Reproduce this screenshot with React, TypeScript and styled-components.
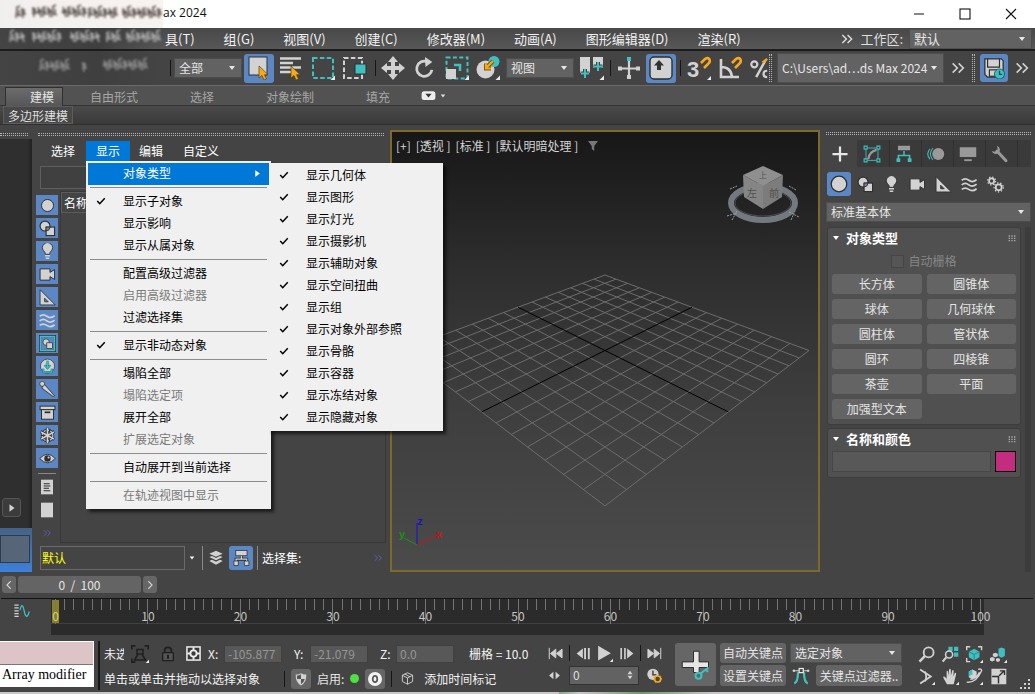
import React from "react";
import styled, { createGlobalStyle, css } from "styled-components";

const L = "#d2d2d2";
const T = "#3fc0c0";
const O = "#f6a81c";
const D = "#2e2e2e";
const BLUE = "#5b88c4";

const Global = createGlobalStyle`
  *, *::before, *::after { box-sizing: border-box; }
  html, body { margin: 0; padding: 0; background: #444444; }
  body, button, input, select {
    font-family: "Noto Sans CJK SC", "Liberation Sans", sans-serif;
    font-size: 12px;
    line-height: 16px;
    color: #dedede;
  }
  button, input, select { margin: 0; padding: 0; border: 0; background: none; border-radius: 0; outline: 0; }
  svg { display: block; flex: none; }
`;

/* ---------- icons ---------- */

const cursor = (
  <path d="M12 10 L12 22 L15 19.5 L17 24 L19.5 23 L17.5 18.8 L21 18.5 Z" fill={O} stroke="#5a4010" strokeWidth=".7" />
);
const corner = <path d="M24 19.5 V24 H19.5 Z" fill="#ececec" />;
const magnet = (
  <path d="M14 7 L18 3 Q21 1 22.5 3.5 Q23.5 6 21 8 L17 12" fill="none" stroke={O} strokeWidth="2.6" />
);

const icons: Record<string, React.ReactNode> = {
  select: <><rect x="2" y="1" width="18" height="18" fill={L} stroke={D} />{cursor}</>,
  selectName: <><path d="M1 2.5 H22 M1 7 H14 M1 11.500 H22 M1 16 H13" stroke={L} strokeWidth="2.6" />{cursor}</>,
  region: <><rect x="2" y="2" width="20" height="20" fill="none" stroke={T} strokeWidth="2" strokeDasharray="4.500 2.400" />{corner}</>,
  windowSel: <><rect x="1" y="2" width="18" height="20" fill="none" stroke={L} strokeWidth="2" strokeDasharray="4.500 2.400" /><rect x="12" y="8" width="11" height="10" fill={T} stroke={D} /></>,
  move: <path d="M12 0 L17 6 H14 V10 H18 V7 L24 12 L18 17 V14 H14 V18 H17 L12 24 L7 18 H10 V14 H6 V17 L0 12 L6 7 V10 H10 V6 H7 Z" fill={L} />,
  rotate: <><path d="M19.500 14 A8.300 8.300 0 1 1 14 5" fill="none" stroke={L} strokeWidth="3" /><path d="M12 0 L20 5.500 L12.500 11 Z" fill={L} /></>,
  scale: <><rect x="1.500" y="1.500" width="21" height="21" fill="none" stroke={T} strokeWidth="2" strokeDasharray="4 2.400" /><rect x="1" y="13" width="10" height="10" fill={L} /><path d="M9 9 H15 V15" fill="none" stroke={T} strokeWidth="2.600" />{corner}</>,
  place: <><circle cx="9.500" cy="13.500" r="9" fill={L} /><circle cx="18" cy="5.500" r="5.500" fill={T} /><path d="M17 5 L10 12 M10 7.500 V12.500 H15" fill="none" stroke="#7a5210" strokeWidth="4" /><path d="M17 5 L10 12 M10 7.500 V12.500 H15" fill="none" stroke={O} strokeWidth="2.200" />{corner}</>,
  pivot: <><rect x="0" y="1" width="10" height="16" fill={L} /><rect x="13" y="1" width="10" height="11" fill={L} /><path d="M5 13 V22 M.500 17.500 H9.500 M18 6 V15 M13.500 10.500 H22.500" stroke="#444" strokeWidth="4" /><path d="M5 13 V22 M1 17.500 H9 M18 6 V15 M14 10.500 H22" stroke={T} strokeWidth="2" />{corner}</>,
  manip: <><path d="M12 4 V21 M3 12.500 H21" stroke={L} strokeWidth="2.200" /><path d="M10 1 H14 V5 H10 Z" fill={T} /><path d="M10 19 H14 V23 H10 Z M1 10.500 H5 V14.500 H1 Z M19 10.500 H23 V14.500 H19 Z" fill={L} /></>,
  keyboard: <><rect x="1" y="1" width="22" height="22" rx="4" fill={L} stroke={D} strokeWidth="1.400" /><path d="M10 4 L15 9.500 H12 V14 H8 V9.500 H5 Z" fill="#333" /></>,
  snap: <><text x="0" y="21" fontSize="22" fontWeight="700" fontFamily="Liberation Sans, sans-serif" fill={L}>3</text>{magnet}<path d="M24 20 V24 H20 Z" fill="#ececec" /></>,
  angle: <><path d="M3 3 V21 H21 M3 11 Q13 11 14 21" fill="none" stroke={L} strokeWidth="2.600" />{magnet}</>,
  percent: <><path d="M20 4 L10 22" stroke={L} strokeWidth="2.600" /><circle cx="8" cy="8" r="3.300" fill="none" stroke={L} strokeWidth="2.400" /><path d="M22 15 Q18 15 18 18.500 Q18 22 22 22" fill="none" stroke={L} strokeWidth="2.400" /><path d="M17 6 L22 2" stroke={O} strokeWidth="2.600" /></>,
  save: <><path d="M2 2 H20 L22 4 V22 H5 L2 19 Z" fill={L} stroke={D} strokeWidth="1.400" /><path d="M5 2 V11 H18 V2" fill="none" stroke={D} strokeWidth="1.300" /><rect x="7" y="14" width="8" height="7" fill={L} stroke={D} strokeWidth="1.300" /><circle cx="18" cy="18.500" r="5.500" fill={T} stroke="#1d5d60" /><path d="M18 15 V19 H21" fill="none" stroke="#184a4d" strokeWidth="1.500" /></>,
  chevrons: <path d="M4 5 L11 12 L4 19 M13 5 L20 12 L13 19" fill="none" stroke="currentColor" strokeWidth="2.400" />,
  plus: <path d="M12 2 V22 M2 12 H22" stroke="#e8e8e8" strokeWidth="3" />,
  modify: <><path d="M4 6 V19 M6 4 H18 M20 6 V18 M6 20.500 H18" stroke={T} strokeWidth="1.200" fill="none" /><path d="M1.500 1.500 h4 v4 h-4 z M18.500 1.500 h4 v4 h-4 z M1.500 18.500 h4 v4 h-4 z M18.500 18.500 h4 v4 h-4 z" fill="none" stroke={T} strokeWidth="1.500" /><path d="M7 19 Q8 9 18 6.500" fill="none" stroke="#999" strokeWidth="3" /></>,
  hierarchy: <><rect x="4" y="1" width="16" height="6" fill="#999" /><path d="M12 8 V14 M4.500 19 V14 H19.500 V19" fill="none" stroke={T} strokeWidth="2" /><path d="M2 17.500 h5 v5 h-5 z M17 17.500 h5 v5 h-5 z" fill={T} /></>,
  motion: <><circle cx="15" cy="12" r="8" fill="#999" /><path d="M8 4 Q1 12 8 20 M4 5 Q-2 12 4 19" fill="none" stroke={T} strokeWidth="1.400" /></>,
  display: <><rect x="1" y="3" width="22" height="13" fill="#999" /><rect x="7" y="19" width="10" height="2.500" fill="#999" /></>,
  utility: <><path d="M8 8 L20 21" stroke="#999" strokeWidth="4" strokeLinecap="round" /><path d="M8 1 A6 6 0 0 1 10 11 A6 6 0 0 1 1 8 L5 9 L9 6 Z" fill="#999" /></>,
  sphere: <circle cx="12" cy="12" r="8.500" fill={L} stroke={D} strokeWidth="1.400" />,
  shapes: <><circle cx="8.500" cy="8.500" r="7" fill={L} stroke={D} strokeWidth="1.600" /><rect x="10" y="10" width="12" height="12" fill={L} stroke={D} strokeWidth="1.600" /><path d="M10 15.500 Q15.500 15 15.500 10 H10 Z" fill="#7f8a99" stroke={D} strokeWidth="1.300" /></>,
  light: <><path d="M9 16 Q9 13 6.500 11 A7 7 0 1 1 17.500 11 Q15 13 15 16 Z" fill={L} stroke={D} strokeWidth="1.200" /><path d="M8.500 18 H15.500 M9.500 21.500 H14.500" stroke={L} strokeWidth="2.400" /></>,
  camera: <path d="M1.500 4 H15.500 V9 L22 5 V19 L15.500 15 V20 H1.500 Z" fill={L} stroke={D} strokeWidth="1.400" />,
  helper: <path fillRule="evenodd" d="M1.500 1 L23 22.500 H1.500 Z M8 13 V18 H13 Z" fill={L} stroke={D} strokeWidth="1.200" />,
  waves: <path d="M1 6 Q6 2 11 6 T22 5 M1 12.500 Q6 8.500 11 12.500 T22 11.500 M1 19 Q6 15 11 19 T22 18" fill="none" stroke={L} strokeWidth="2.400" />,
  gears: <><circle cx="6.500" cy="7" r="3.600" fill="none" stroke={L} strokeWidth="2.400" /><circle cx="6.500" cy="7" r="5.600" fill="none" stroke={L} strokeWidth="1.800" strokeDasharray="2 2.400" /><circle cx="16.500" cy="16" r="4.200" fill="none" stroke={L} strokeWidth="2.400" /><circle cx="16.500" cy="16" r="6.400" fill="none" stroke={L} strokeWidth="1.800" strokeDasharray="2 2.500" /></>,
  group: <><rect x="1.500" y="1.500" width="21" height="21" fill="none" stroke={D} strokeWidth="3" /><rect x="2" y="2" width="20" height="20" fill="none" stroke={T} strokeWidth="2" /><circle cx="10" cy="10" r="4.500" fill={L} stroke={D} /><rect x="11" y="11" width="8" height="8" fill={L} stroke={D} /></>,
  xref: <><circle cx="12" cy="11.500" r="10" fill={L} stroke={D} /><path d="M12 4 V13 M8 10 L12 14.500 L16 10 M6 15 V20 H18 V15" fill="none" stroke="#1a7478" strokeWidth="3" /><path d="M12 4 V13 M8 10 L12 14.500 L16 10 M6 15 V20 H18 V15" fill="none" stroke={T} strokeWidth="1.600" /></>,
  bone: <><path d="M7 4 L22 21 L20 22 L4 10 Z" fill={L} stroke={D} strokeWidth="1.200" /><circle cx="4.500" cy="4" r="3.500" fill={L} stroke={D} /></>,
  container: <><rect x="1.500" y="3" width="21" height="5" fill={L} stroke={D} strokeWidth="1.400" /><rect x="3.500" y="8" width="17" height="13.500" fill={L} stroke={D} strokeWidth="1.400" /><rect x="8" y="10.500" width="8" height="2.500" fill={D} /></>,
  frozen: <><path d="M12 1 V23 M2.500 6.500 L21.500 17.500 M21.500 6.500 L2.500 17.500" stroke={D} strokeWidth="4.500" /><circle cx="12" cy="12" r="7.500" fill="none" stroke={D} strokeWidth="4" /><path d="M12 1.500 V22.500 M3 7 L21 17 M21 7 L3 17" stroke={L} strokeWidth="2.300" /><circle cx="12" cy="12" r="7.500" fill="none" stroke={L} strokeWidth="1.600" strokeDasharray="3 1.800" /></>,
  eye: <><path d="M1 12 Q12 0 23 12 Q12 24 1 12 Z" fill={L} stroke={D} strokeWidth="1.300" /><circle cx="12" cy="12" r="4.500" fill={D} /><circle cx="13.500" cy="10.500" r="1.500" fill={L} /></>,
  layers: <path d="M12 1 L22 5.500 L12 10 L2 5.500 Z M2 10.500 L6 9 L12 12 L18 9 L22 10.500 L12 15.500 L2 10.500 Z M2 16.500 L6 14.500 L12 17.500 L18 14.500 L22 16.500 L12 22 Z" fill={L} />,
  tree: <><rect x="5" y="2" width="15" height="7" fill={L} stroke={D} /><path d="M12.500 9 V14 M5.500 17 V13.500 H19.500 V17" fill="none" stroke={D} strokeWidth="4" /><path d="M12.500 9 V14 M5.500 17 V13.500 H19.500 V17" fill="none" stroke={L} strokeWidth="1.800" /><path d="M2.500 16 h6 v6 h-6 z M16.500 16 h6 v6 h-6 z" fill={L} stroke={D} /></>,
  doc: <><path d="M3 1 H21 V23 H3 Z" fill={L} /><path d="M7 7 H16 M7 10.500 H17 M7 14 H15 M7 17.500 H17" stroke={D} strokeWidth="1.600" /></>,
  blank: <path d="M3 1 H21 V23 H3 Z" fill={L} />,
  curve: <><path d="M2 3 H8 M2 7 H8 M2 11 H8 M2 15 H8 M2 19 H8" stroke={L} strokeWidth="1.800" /><path d="M10 10 Q12 0 14.500 6 L17 16 Q20 23 23 12" fill="none" stroke={T} strokeWidth="1.800" /></>,
  isolate: <><path d="M1 6 V1 H6 M18 1 H23 V6 M6 23 H1 V18" fill="none" stroke="#1f1f1f" strokeWidth="2.400" /><path d="M8 6 H16 V12 H8 Z M4 21 L9 13 M20 21 L15 13 M4 20 H20" fill="none" stroke="#1f1f1f" strokeWidth="2" />{corner}</>,
  lock: <><path d="M7 11 V6 Q7 2 12 2 Q17 2 17 6 V11" fill="none" stroke="#1f1f1f" strokeWidth="2.600" /><rect x="4" y="10" width="16" height="12" rx="1" fill="#555" stroke="#1f1f1f" strokeWidth="2" /><path d="M12 13 V19" stroke="#1f1f1f" strokeWidth="3" /></>,
  absolute: <><rect x="1.500" y="1.500" width="21" height="21" fill="#3a3a3a" stroke="#eee" strokeWidth="2.400" /><circle cx="12" cy="12" r="5" fill="none" stroke="#eee" strokeWidth="3" /><path d="M12 2 V8 M12 16 V22 M2 12 H8 M16 12 H22" stroke="#eee" strokeWidth="3" /></>,
  shield: <><path d="M12 2 Q16 4.500 21 4 Q22 18 12 23 Q2 18 3 4 Q8 4.500 12 2 Z" fill={L} /><path d="M12 4 Q8 6.500 5 6 Q5 10 5.500 12 H12 Z M12 12 H18.500 Q17 18 12 21 Z" fill="#555" /></>,
  zero: <><circle cx="12" cy="12" r="10.500" fill="#f2f2f2" /><ellipse cx="12" cy="12" rx="3.400" ry="4.800" fill="none" stroke="#555" strokeWidth="2.600" /></>,
  cube: <path d="M12 1.500 L21.500 6 V17.500 L12 22.500 L2.500 17.500 V6 Z M2.500 6 L12 11 L21.500 6 M12 11 V22.500 M7 3.700 L17 9" fill="none" stroke={L} strokeWidth="1.700" />,
  first: <path d="M2 3 V21 M4 12 L12.500 5 V19 Z M13.500 12 L22.500 5 V19 Z" fill={L} stroke={L} strokeWidth="1.600" />,
  last: <path d="M22 3 V21 M20 12 L11.500 5 V19 Z M10.500 12 L1.500 5 V19 Z" fill={L} stroke={L} strokeWidth="1.600" />,
  prev: <><path d="M1 12 L11 4 V20 Z" fill={L} /><path d="M14.500 3 V21 M20.500 3 V21" stroke={L} strokeWidth="3" /></>,
  next: <><path d="M23 12 L13 4 V20 Z" fill={L} /><path d="M9.500 3 V21 M3.500 3 V21" stroke={L} strokeWidth="2.600" /></>,
  play: <><path d="M3 1 L21 11.500 L3 22 Z" fill={L} />{corner}</>,
  keyMode: <path d="M2 12 L10 5 V19 Z M22 12 L14 5 V19 Z" fill={L} />,
  clock: <><circle cx="9.500" cy="10" r="9" fill={L} /><path d="M9.500 4 V11 H15" fill="none" stroke={D} strokeWidth="2" /><circle cx="17" cy="17.500" r="4.800" fill="#444" stroke={O} strokeWidth="2.600" /><circle cx="17" cy="17.500" r="6.400" fill="none" stroke={O} strokeWidth="1.600" strokeDasharray="2 2.200" /></>,
  bigKey: <><path d="M10 1 H14.500 V9.500 H22 V14 H14.500 V18 H10 V14 H1 V9.500 H10 Z" fill="#e6e6e6" stroke={D} strokeWidth=".800" /><circle cx="14" cy="20.500" r="2.400" fill="none" stroke={T} strokeWidth="1.600" /><path d="M15.500 19 L22 14 M20 15.500 L21.500 17.500" stroke={T} strokeWidth="1.600" /></>,
  tangent: <><path d="M3 22 Q8 20 8 7 M21 22 Q16 20 16 7" fill="none" stroke={T} strokeWidth="3" /><path d="M3 5 H9 M15 5 H21" stroke={L} strokeWidth="1.400" /><rect x="9.500" y="2" width="5.500" height="5.500" fill="none" stroke="#eee" strokeWidth="1.600" /><circle cx="2.500" cy="5" r="1.700" fill={L} /><circle cx="21.500" cy="5" r="1.700" fill={L} /></>,
  zoom: <><circle cx="15" cy="9" r="7" fill="none" stroke={L} strokeWidth="2.600" /><path d="M10 14 L2 22" stroke={L} strokeWidth="3.600" /></>,
  zoomAll: <><path d="M9 1 H15 V7 H9 Z M17 1 H23 V7 H17 Z M17 9 H23 V15 H17 Z" fill={T} /><circle cx="10" cy="12" r="5" fill="#444" stroke={L} strokeWidth="2.200" /><path d="M6 16 L1 22" stroke={L} strokeWidth="3" /></>,
  extents: <><path d="M1 6 V1 H6 M17 1 H22 V6 M6 22 H1 V17" fill="none" stroke={L} strokeWidth="2" /><path d="M11.500 4 L19 8 V16 L11.500 20 L4 16 V8 Z" fill={T} /><path d="M4 8 L11.500 12 L19 8 M11.500 12 V20" fill="none" stroke="#1d6d70" strokeWidth="1" />{corner}</>,
  extentsAll: <><path d="M12 4 L16 2 L21 4 V14 L16 16.500 L12 14 Z" fill={T} /><path d="M4 11 L7.500 9.500 L11 11 V14.500 L7.500 16 L4 14.500 Z M0 17 L3 15.500 L6.500 17 V20.500 L3 22 L0 20.500 Z M8.500 18 L11 17 L14 18 V21 L11 22.500 L8.500 21 Z" fill={L} />{corner}</>,
  fov: <><path d="M3 2 L18 12 L3 22" fill="none" stroke={L} strokeWidth="2.600" /><path d="M10 5 Q13 12 10 19" fill="none" stroke={L} strokeWidth="2.400" />{corner}</>,
  pan: <><path d="M7 23 L2 14 Q1 11 4 12.500 L6.500 15 V5 Q7 2.500 8.500 5 L9 11 L10 2 Q11.500 0 12.500 2.500 V11 L14.500 3 Q16.500 2 16.500 5 L16 12 L18 7 Q20 6 20 8.500 L18 17 L16.500 23 Z" fill={L} />{corner}</>,
  orbit: <><path d="M9 2 L15 5 V13 L9 16 L4 13 V5 Z" fill={L} /><path d="M9 2 L4 5 V12 L9 9 Z" fill={T} /><path d="M1 20 Q14 22 22 4 Q22 0 17 2 M6 16 Q14 16 19 6" fill="none" stroke={L} strokeWidth="2" />{corner}</>,
  maximize: <><path d="M2 1 H23 V23 H2 Z" fill={L} /><path d="M3 12 H12 V22 M13 11 L20 4 M14 4 H20.500 V10" fill="none" stroke={D} strokeWidth="2" /></>,
  funnel: <path d="M2 2 H22 L14.500 12 V22 L9.500 18 V12 Z" fill="#777" />,
  triDown: <path d="M3 6 H21 L12 18 Z" fill="currentColor" />,
  triRight: <path d="M6 3 V21 L18 12 Z" fill="currentColor" />,
  check: <path d="M3 12 L9 18.500 L21 5.500" fill="none" stroke="currentColor" strokeWidth="3.600" />,
  left: <path d="M16 3 L7 12 L16 21" fill="none" stroke="currentColor" strokeWidth="2.600" />,
  right: <path d="M8 3 L17 12 L8 21" fill="none" stroke="currentColor" strokeWidth="2.600" />,
  min: <path d="M2 12 H22" stroke="currentColor" strokeWidth="2" />,
  max: <rect x="2" y="2" width="20" height="20" fill="none" stroke="currentColor" strokeWidth="2.200" />,
  close: <path d="M2 2 L22 22 M22 2 L2 22" stroke="currentColor" strokeWidth="2.200" />,
  grip: <path d="M2 4h4v4H2z M10 4h4v4h-4z M18 4h4v4h-4z M2 11h4v4H2z M10 11h4v4h-4z M18 11h4v4h-4z M2 18h4v4H2z M10 18h4v4h-4z M18 18h4v4h-4z" fill="#aaa" />,
  sizeGrip: <path d="M18 2h4v4h-4z M18 10h4v4h-4z M18 18h4v4h-4z M10 10h4v4h-4z M10 18h4v4h-4z M2 18h4v4H2z" fill={L} />,
  updown: <path d="M6 10 L12 2 L18 10 Z M6 14 L12 22 L18 14 Z" fill={L} />,
  pill: <><rect x="1" y="5" width="22" height="14" rx="4" fill="#ededed" /><path d="M7 9 H17 L12 15 Z" fill="#333" /></>,
};

const Icon = ({ n, s = 16 }: { n: string; s?: number }) => (
  <svg width={s} height={s} viewBox="0 0 24 24" aria-hidden="true">{icons[n]}</svg>
);

/* Soft, unreadable marks that cover the left end of the top bars. */
const Smudge = ({ height, ink, spans }: { height: number; ink: string; spans: number[][] }) => (
  <SmudgeArt width="163" height={height} viewBox={`0 0 163 ${height}`} aria-hidden="true">
    {spans.map(([x0, x1, cy], k) => {
      const marks: React.ReactNode[] = [];
      for (let x = x0, i = k; x < x1; x += 5, i++) {
        const a = (i * 7) % 5;
        marks.push(
          <path
            key={x}
            d={`M${x} ${cy - 5 + a} l4 ${a - 2} M${x + 1} ${cy - 5} l${a - 1} 10 M${x} ${cy + 1} l5 ${2 - a} M${x + 3} ${cy - 3} v${6 - a}`}
          />
        );
      }
      return <g key={k} fill="none" stroke={ink} strokeWidth="1.5">{marks}</g>;
    })}
  </SmudgeArt>
);
const SmudgeArt = styled.svg`filter: blur(0.8px);`;

/* ---------- shared parts ---------- */

const Shell = styled.div`
  display: flex;
  flex-direction: column;
  min-height: 100vh;
  overflow: hidden;
  background: #444444;
`;

const Handle = styled.div<{ $vertical?: boolean }>`
  flex: none;
  ${p => (p.$vertical
    ? css`width: 3px; height: 28px; margin-right: 1px; border-left: 1px dotted #b4b4b4; border-right: 1px dotted #b4b4b4;`
    : css`height: 3px; margin-bottom: 1px; border-top: 1px dotted #b4b4b4; border-bottom: 1px dotted #b4b4b4;`)}
`;

const Rule = styled.span<{ $h?: number; $light?: boolean }>`
  flex: none;
  width: 1px;
  height: ${p => p.$h ?? 16}px;
  background: ${p => (p.$light ? "#8a8a8a" : "#161616")};
`;

const ComboWrap = styled.label<{ $w?: number; $h: number }>`
  position: relative;
  display: block;
  flex: none;
  width: ${p => (p.$w ? `${p.$w}px` : "auto")};
  height: ${p => p.$h}px;
  border: 1px solid #4d4d4d;
  background: #626262;
  color: #e6e6e6;
  select {
    width: 100%;
    height: 100%;
    padding: 0 4px;
    appearance: none;
    color: inherit;
  }
  svg { position: absolute; right: 5px; top: calc(50% - 4px); pointer-events: none; }
`;

const Combo = ({ label, value, ...rest }: { label: string; value: string; $w?: number; $h: number }) => (
  <ComboWrap {...rest}>
    <select aria-label={label}><option>{value}</option></select>
    <Icon n="triDown" s={8} />
  </ComboWrap>
);

const IconButton = styled.button<{ $w: number; $h: number; $on?: boolean; $raised?: boolean; $color?: string }>`
  display: flex;
  align-items: center;
  justify-content: center;
  flex: none;
  width: ${p => p.$w}px;
  height: ${p => p.$h}px;
  overflow: hidden;
  border-radius: 3px;
  color: ${p => p.$color ?? L};
  background: ${p => (p.$on ? BLUE : p.$raised ? "#666666" : "transparent")};
`;

const Spacer = styled.div`flex: 1;`;

/* ---------- top bars ---------- */

const TitleBar = styled.header`
  display: flex;
  height: 28px;
  background: #ffffff;
  color: #111111;
`;
const TitleVeil = styled.div`
  width: 163px;
  background: linear-gradient(90deg, #f1efee, #f9f3ef);
`;
const TitleText = styled.h1`
  margin: 0;
  font: 400 12px/26px "Open Sans", sans-serif;
`;
const WindowButtons = styled.div`
  display: flex;
  align-items: center;
  padding-right: 1px;
  button { width: 46px; height: 24px; display: flex; align-items: center; justify-content: center; color: #111111; }
`;

const MenuBar = styled.nav`
  display: flex;
  height: 23px;
  padding-right: 3px;
  background: linear-gradient(#484848, #575757);
  border-bottom: 2px solid #1c1c1c;
`;
const MenuVeil = styled.div`
  flex: none;
  width: 163px;
  background: linear-gradient(90deg, #444444, #3f3f3f 60%, transparent);
`;
const MenuList = styled.div`
  display: flex;
  gap: 29px;
  padding-left: 2px;
  button { font-size: 13px; line-height: 18px; white-space: nowrap; color: #f2f2f2; }
`;
const Workspace = styled.div`
  display: flex;
  align-items: center;
  gap: 6px;
  font-size: 13px;
  select { font-size: 13px; }
`;

const Toolbar = styled.div`
  display: flex;
  align-items: center;
  height: 34px;
  padding-right: 3px;
`;
const ToolGroup = styled.div<{ $gap?: number; $pad?: number; $start?: number }>`
  display: flex;
  align-items: center;
  gap: ${p => p.$gap ?? 2}px;
  padding: 0 ${p => p.$pad ?? 2}px 0 ${p => p.$start ?? p.$pad ?? 2}px;
`;

const Ribbon = styled.div`
  display: flex;
  height: 21px;
  border-top: 1px solid #6a6a6a;
  border-bottom: 1px solid #333333;
  background: #525252;
`;
const RibbonTab = styled.button<{ $w: number; $on?: boolean }>`
  width: ${p => p.$w}px;
  height: 19px;
  margin-top: 1px;
  color: ${p => (p.$on ? "#e4e4e4" : "#a6a6a6")};
  ${p => p.$on && css`
    border: 1px solid #303030;
    border-bottom: 0;
    background: linear-gradient(#6c6c6c, #565656);
    padding-left: 16px;
    margin-left: 5px;
  `}
`;
const SubRibbon = styled.div`
  height: 19px;
  padding-left: 3px;
  border-bottom: 1px solid #303030;
  background: linear-gradient(#4a4a4a, #3a3a3a);
  button { height: 18px; padding: 0 4px; border: 1px solid #5c5c5c; background: #484848; line-height: 15px; }
`;

/* ---------- main area ---------- */

const Main = styled.main`
  display: flex;
  flex: 1;
  min-height: 450px;
  padding: 5px 4px 3px 0;
`;

const Dock = styled.aside`
  display: flex;
  flex-direction: column;
  flex: none;
  width: 32px;
  padding-top: 3px;
  ${Handle} { width: 28px; }
`;
const DockBody = styled.div`
  display: flex;
  flex-direction: column;
  justify-content: flex-end;
  flex: 1;
  margin-top: 2px;
  background: linear-gradient(90deg, #2f2f2f 85%, #222222);
  button { margin: 0 0 11px 2px; border: 1px solid #555555; background: #3c3c3c; }
`;
const DockTile = styled.div`
  height: 44px;
  padding: 7px 2px 9px 0;
  background: linear-gradient(#466284, #3d80dc);
  &::after { content: ""; display: block; height: 28px; border: 1px solid #2c3b4d; background: #566578; }
`;

const Explorer = styled.section`
  display: flex;
  flex-direction: column;
  flex: none;
  width: 358px;
  padding: 3px 4px 2px 4px;
`;
const ExplorerHandle = styled(Handle)`margin: 0 2px 1px;`;
const ExplorerMenu = styled.div`
  position: relative;
  z-index: 5;
  display: flex;
  margin-top: 4px;
  padding-left: 4px;
`;
const ExplorerMenuItem = styled.div<{ $w: number }>`
  position: relative;
  width: ${p => p.$w}px;
`;
const ExplorerMenuButton = styled.button<{ $open?: boolean }>`
  width: 100%;
  height: 20px;
  color: #ffffff;
  background: ${p => (p.$open ? "#0078d7" : "transparent")};
`;
const Popup = styled.div<{ $w: number; $sub?: boolean }>`
  position: absolute;
  left: ${p => (p.$sub ? "100%" : "0")};
  top: ${p => (p.$sub ? "0" : "100%")};
  z-index: 10;
  width: ${p => p.$w}px;
  padding: 2px;
  background: #f0f0f0;
  box-shadow: 3px 3px 3px rgba(0, 0, 0, 0.6);
`;
const PopupRow = styled.div`position: relative;`;
const PopupItem = styled.button<{ $hot?: boolean }>`
  display: grid;
  grid-template-columns: 35px 1fr 16px;
  align-items: center;
  width: 100%;
  height: 22px;
  padding: 0 0 2px;
  text-align: left;
  color: ${p => (p.$hot ? "#ffffff" : "#000000")};
  background: ${p => (p.$hot ? "#0078d7" : "transparent")};
  &:disabled { color: #7a7a7a; }
  > i { padding-left: 8px; }
`;
const PopupRule = styled.hr`
  height: 1px;
  margin: 2px;
  margin-bottom: 3px;
  border: 0;
  background: #8c8c8c;
`;
const SearchBox = styled.input`
  height: 23px;
  margin: 5px 8px 0 4px;
  border: 1px solid #5e5e5e;
  background: #404040;
`;
const ExplorerBody = styled.div`
  display: flex;
  flex: 1;
  min-height: 0;
`;
const FilterColumn = styled.div`
  display: flex;
  flex-direction: column;
  align-items: center;
  gap: 3px;
  width: 22px;
  padding-top: 6px;
  ${IconButton} { border-radius: 0; }
`;
const FilterRule = styled.hr`width: 18px; height: 1px; margin: 2px 0 0; border: 0; background: #8a8a8a;`;
const TreeBox = styled.div`
  flex: 1;
  margin: 2px 0 0 2px;
  border: 1px solid #383838;
`;
const TreeHead = styled.button`
  display: block;
  width: 100%;
  height: 21px;
  padding-left: 2px;
  border: 1px solid #5c5c5c;
  text-align: left;
  color: #ffffff;
`;
const ExplorerFoot = styled.div`
  display: flex;
  align-items: center;
  gap: 4px;
  height: 25px;
  margin: 2px 0 0 4px;
  color: #ffffff;
`;
const LayerField = styled.input`
  width: 145px;
  height: 24px;
  padding: 0 1px;
  border: 1px solid #6a6a6a;
  color: #ffff00;
`;

const Viewport = styled.section`
  position: relative;
  flex: 1;
  min-width: 0;
  border: 2px solid #7d692a;
  background: linear-gradient(#171717, #2e2e2e 32%, #3e3e3e 62%, #4b4b4b);
`;
const ViewLabels = styled.div`
  position: relative;
  display: flex;
  align-items: center;
  gap: 5px;
  padding: 6px 4px;
  button { color: #d4d4d4; white-space: nowrap; }
`;
const SceneArt = styled.svg`
  position: absolute;
  inset: 0;
  width: 100%;
  height: 100%;
`;

const N = 7;
const project = (u: number, v: number) => {
  const a = (u + v) / (2 * N);
  const b = (u - v) / (2 * N);
  const w = 1 - 0.3463 * a;
  return [213 + (204 * b) / w, 218.5 + (101.6 * a) / w];
};
const gridLine = (u1: number, v1: number, u2: number, v2: number, ink: string) => {
  const [x1, y1] = project(u1, v1);
  const [x2, y2] = project(u2, v2);
  return <line key={`${u1},${v1},${u2},${v2}`} x1={x1} y1={y1} x2={x2} y2={y2} stroke={ink} strokeWidth="1" />;
};
const steps = Array.from({ length: N * 2 + 1 }, (_, i) => i - N);

const Scene = () => (
  <SceneArt viewBox="0 0 426 438" aria-hidden="true">
    {steps.filter(i => i).map(i => gridLine(i, -N, i, N, "#6c6c6c"))}
    {steps.filter(i => i).map(i => gridLine(-N, i, N, i, "#6c6c6c"))}
    {gridLine(0, -N, 0, N, "#000")}
    {gridLine(-N, 0, N, 0, "#000")}
    <ellipse cx="371" cy="71" rx="32" ry="17" fill="none" stroke="#74797f" strokeWidth="6" />
    <ellipse cx="371" cy="71" rx="28" ry="13" fill="none" stroke="#4b4e53" strokeWidth="1" />
    <path d="M338 57 l7 -3 M397 54 l7 4 M335 84 l10 -3 M340 88 l5 -9 M397 80 l10 5 M399 88 l4 -9" stroke="#9a9fa5" strokeDasharray="2 1" />
    <path d="M371 34 L391 43 L371 54 L351 43 Z" fill="#8f8f8f" />
    <path d="M351 43 L371 54 V77 L352 65 Z" fill="#858585" />
    <path d="M391 43 L371 54 V77 L390 65 Z" fill="#7c7c7c" />
    <g fill="#505050" fontSize="10" textAnchor="middle" fontFamily="Noto Sans CJK SC, sans-serif">
      <text x="371" y="46" fontSize="8">上</text>
      <text x="360" y="65">左</text>
      <text x="382" y="65">前</text>
    </g>
    <path d="M25 413 V391" stroke="#1414c8" />
    <path d="M25 413 L46 403" stroke="#c81414" />
    <path d="M25 413 L12 406" stroke="#149614" />
    <g fontSize="11" fontWeight="700" textAnchor="middle" fontFamily="Liberation Sans, sans-serif">
      <text x="28" y="393" fill="#1414c8">z</text>
      <text x="47" y="406" fill="#c81414">x</text>
      <text x="10" y="406" fill="#149614">y</text>
    </g>
  </SceneArt>
);

const Command = styled.aside`
  display: flex;
  flex-direction: column;
  flex: none;
  width: 211px;
  padding: 2px 0 0 6px;
`;
const CommandTabs = styled.div`
  display: flex;
  margin-top: 4px;
  background: #3a3a3a;
`;
const CommandTab = styled.button<{ $on?: boolean }>`
  display: flex;
  align-items: center;
  justify-content: center;
  width: 32px;
  height: 27px;
  padding-right: 4px;
  border-right: 1px solid ${p => (p.$on ? "#3a3a3a" : "#303030")};
  background: ${p => (p.$on ? "#444444" : "transparent")};
`;
const Categories = styled.div`
  display: flex;
  gap: 2px;
  margin: 5px 0 6px 1px;
`;
const RolloutArea = styled.div`
  display: flex;
  flex: 1;
  gap: 4px;
  margin: 5px 0 0 1px;
`;
const RolloutStack = styled.div`
  display: flex;
  flex-direction: column;
  gap: 3px;
  flex: 1;
`;
const ScrollTrack = styled.div`width: 6px; background: #3c3c3c;`;
const Rollout = styled.section`
  padding: 0 4px 5px;
  border: 1px solid #3d3d3d;
  border-radius: 3px;
  background: #505050;
`;
const RolloutHead = styled.h2`
  display: flex;
  align-items: center;
  gap: 6px;
  height: 20px;
  margin: 0;
  font-size: 13px;
  font-weight: 700;
  color: #ffffff;
  span { flex: 1; }
`;
const AutoGrid = styled.label`
  display: flex;
  align-items: center;
  justify-content: center;
  gap: 4px;
  height: 26px;
  color: #868686;
  input { appearance: none; width: 13px; height: 13px; border: 1px solid #454545; background: #555555; }
`;
const ButtonGrid = styled.div`
  display: grid;
  grid-template-columns: 1fr 1fr;
  gap: 5px;
`;
const FlatButton = styled.button<{ $h?: number; $w?: number }>`
  height: ${p => p.$h ?? 20}px;
  width: ${p => (p.$w ? `${p.$w}px` : "auto")};
  overflow: hidden;
  white-space: nowrap;
  border-radius: 3px;
  background: #646464;
  color: #e4e4e4;
`;
const NameRow = styled.div`
  display: flex;
  gap: 4px;
  padding-top: 2px;
  input { flex: 1; min-width: 0; height: 21px; border: 1px solid #464646; background: #585858; }
  button { width: 21px; height: 21px; border: 1px solid #000000; background: #c42c80; }
`;

/* ---------- timeline ---------- */

const TimeSlider = styled.div`
  display: flex;
  align-items: center;
  gap: 2px;
  height: 23px;
  padding: 0 0 4px 2px;
  button { height: 17px; }
`;
const Track = styled.div`
  display: flex;
  height: 38px;
  margin: 0 2px 0 1px;
  border-top: 1px solid #151515;
`;
const TrackSide = styled.div<{ $w: number }>`
  flex: none;
  width: ${p => p.$w}px;
  padding: 4px 12px;
`;
const RulerArt = styled.svg`
  flex: 1 1 0;
  min-width: 0;
  height: 36px;
  overflow: visible;
  background: #2b2b2b;
`;

const ticks = Array.from({ length: 101 }, (_, i) => i);
const Ruler = () => {
  const at = (i: number) => `${0.48 + i * 0.9915}%`;
  return (
    <RulerArt aria-label="时间轴">
      <line x1="0" x2="100%" y1="24.5" y2="24.5" stroke="#404040" />
      <rect x="1" y="1" width="7" height="23" fill="#8a8222" />
      {ticks.map(i => (
        <line key={i} x1={at(i)} x2={at(i)} y1="0" y2={i % 10 ? 11 : 25} stroke="#747474" shapeRendering="crispEdges" />
      ))}
      {ticks.filter(i => i % 10 === 0).map(i => (
        <text key={i} x={at(i)} y="22" fontSize="12" textAnchor="middle" fill={i ? "#c4c4c4" : "#d8d060"}>{i}</text>
      ))}
    </RulerArt>
  );
};

/* ---------- status area ---------- */

const Status = styled.footer`
  display: flex;
  height: 56px;
  padding: 5px 4px 2px 0;
  color: #f2f2f2;
`;
const Script = styled.div`
  display: flex;
  flex-direction: column;
  width: 94px;
  height: 46px;
  border: 1px solid #ffffff;
  border-left: 0;
  input {
    flex: 1;
    width: 100%;
    min-height: 0;
    padding: 0 2px;
    font-family: "Liberation Serif", serif;
    font-size: 14px;
    color: #000000;
    background: #ffffff;
  }
  input:first-child { background: #dcc4c7; border-bottom: 1px solid #777777; }
`;
const StatusMiddle = styled.div`
  display: flex;
  flex-direction: column;
  gap: 4px;
  flex: 1;
  min-width: 0;
  margin-left: 4px;
  padding: 2px 0 0 4px;
  border-left: 2px solid #161616;
`;
const StatusRow = styled.div`
  display: flex;
  align-items: center;
  height: 21px;
  white-space: nowrap;
`;
const Clipped = styled.span`width: 20px; overflow: hidden;`;
const StateIcons = styled.div`
  display: flex;
  align-items: center;
  justify-content: space-between;
  width: 70px;
  margin: 0 7px;
`;
const Coord = styled.label`
  display: flex;
  align-items: center;
  width: 86px;
  span { width: 16px; }
  input { width: 58px; height: 18px; padding: 0 3px; border: 1px solid #404040; background: #585858; color: #969696; }
`;
const GridSize = styled.span`margin-left: 3px;`;
const Prompt = styled.span`width: 180px;`;
const Dot = styled.span`width: 9px; height: 9px; border-radius: 50%; background: #50e040;`;
const Enable = styled.div`
  display: flex;
  align-items: center;
  gap: 6px;
  padding-left: 6px;
  color: #e4e4e4;
`;

const Transport = styled.div`
  display: flex;
  flex-direction: column;
  gap: 2px;
  flex: none;
  width: 130px;
  padding-top: 2px;
`;
const TransportRow = styled.div`
  display: flex;
  align-items: center;
  justify-content: space-between;
  height: 20px;
  padding: 0 6px 0 10px;
`;
const FrameField = styled.label`
  display: flex;
  align-items: center;
  width: 70px;
  height: 19px;
  padding-right: 3px;
  border: 1px solid #333333;
  background: #626262;
  input { flex: 1; min-width: 0; padding: 0 3px; }
`;
const KeyArea = styled.div`
  display: grid;
  grid-template-columns: 41px 66px 22px 86px;
  grid-template-rows: 20px 21px;
  column-gap: 4px;
  row-gap: 2px;
  flex: none;
  margin: 2px 0 0 7px;
  > :first-child { grid-row: 1 / 3; }
  > label { grid-column: 3 / 5; }
`;
const Nav = styled.div`
  display: grid;
  grid-template-columns: repeat(4, 24px);
  grid-auto-rows: 22px;
  flex: none;
  margin: 2px 0 0 12px;
`;
const SizeCorner = styled.div`align-self: flex-end; margin-left: 9px;`;
const Behind = styled.div`
  height: 2px;
  background: linear-gradient(90deg, #c9c6c6 54%, #8aa886 54%, #c9c6c6 56%, #6f9a6c 62%, #c9c6c6 69%);
`;

/* ---------- data ---------- */

const menus = ["具(T)", "组(G)", "视图(V)", "创建(C)", "修改器(M)", "动画(A)", "图形编辑器(D)", "渲染(R)"];
const filters = ["sphere", "shapes", "light", "camera", "helper", "waves", "group", "xref", "bone", "container", "frozen", "eye"];
const typeItems = ["显示几何体", "显示图形", "显示灯光", "显示摄影机", "显示辅助对象", "显示空间扭曲", "显示组", "显示对象外部参照", "显示骨骼", "显示容器", "显示冻结对象", "显示隐藏对象"];
type Entry = { t?: string; on?: boolean; off?: boolean };
const showItems: Entry[] = [
  {}, { t: "显示子对象", on: true }, { t: "显示影响" }, { t: "显示从属对象" },
  {}, { t: "配置高级过滤器" }, { t: "启用高级过滤器", off: true }, { t: "过滤选择集" },
  {}, { t: "显示非动态对象", on: true },
  {}, { t: "塌陷全部" }, { t: "塌陷选定项", off: true }, { t: "展开全部" }, { t: "扩展选定对象", off: true },
  {}, { t: "自动展开到当前选择" },
  {}, { t: "在轨迹视图中显示", off: true },
];
const primitives = ["长方体", "圆锥体", "球体", "几何球体", "圆柱体", "管状体", "圆环", "四棱锥", "茶壶", "平面", "加强型文本"];
const coords = [["X:", "-105.877"], ["Y:", "-21.079"], ["Z:", "0.0"]];

const Tool = ({ n, w = 32, on, s = 24 }: { n: string; w?: number; on?: boolean; s?: number }) => (
  <IconButton $w={w} $h={29} $on={on} aria-label={n}><Icon n={n} s={s} /></IconButton>
);

export default function App() {
  return (
    <Shell>
      <Global />
      <TitleBar>
        <TitleVeil>
          <Smudge height={28} ink="#5d5551" spans={[[16, 22, 13], [32, 56, 12], [62, 84, 12], [88, 114, 13], [122, 160, 13]]} />
        </TitleVeil>
        <TitleText>ax 2024</TitleText>
        <Spacer />
        <WindowButtons>
          <button aria-label="最小化"><Icon n="min" s={12} /></button>
          <button aria-label="最大化"><Icon n="max" s={12} /></button>
          <button aria-label="关闭"><Icon n="close" s={12} /></button>
        </WindowButtons>
      </TitleBar>

      <MenuBar>
        <MenuVeil>
          <Smudge height={21} ink="#aaaaaa" spans={[[10, 22, 9], [32, 58, 9], [70, 96, 9], [106, 118, 9], [126, 158, 9]]} />
        </MenuVeil>
        <MenuList>{menus.map(m => <button key={m}>{m}</button>)}</MenuList>
        <Spacer />
        <Workspace>
          <Icon n="chevrons" s={14} />
          <span>工作区:</span>
          <Combo label="工作区" value="默认" $w={123} $h={20} />
        </Workspace>
      </MenuBar>

      <Toolbar>
        <MenuVeil>
          <Smudge height={34} ink="#8c8c8c" spans={[[40, 68, 15], [82, 84, 16], [103, 145, 14]]} />
        </MenuVeil>
        <ToolGroup $gap={3} $start={7} $pad={2}><Rule /><Combo label="选择过滤器" value="全部" $w={68} $h={20} /></ToolGroup>
        <Tool n="select" w={30} on />
        <Tool n="selectName" w={33} />
        <Tool n="region" w={32} />
        <Tool n="windowSel" w={32} />
        <ToolGroup $pad={4}><Rule /></ToolGroup>
        <Tool n="move" w={26} />
        <Tool n="rotate" w={38} s={22} />
        <Tool n="scale" w={26} />
        <Tool n="place" w={36} />
        <Combo label="参考坐标系" value="视图" $w={68} $h={20} />
        <Tool n="pivot" w={36} />
        <Rule />
        <Tool n="manip" w={35} />
        <Tool n="keyboard" w={30} on />
        <ToolGroup $pad={4}><Rule /></ToolGroup>
        <Tool n="snap" w={28} />
        <Tool n="angle" w={34} />
        <Tool n="percent" w={22} s={22} />
        <Spacer />
        <ToolGroup $gap={4} $pad={0}>
          <Handle $vertical />
          <Combo label="项目文件夹" value="C:\Users\ad…ds Max 2024" $w={167} $h={30} />
          <IconButton $w={20} $h={28} aria-label="更多"><Icon n="chevrons" s={16} /></IconButton>
          <Handle $vertical />
          <IconButton $w={28} $h={28} $on aria-label="保存"><Icon n="save" s={22} /></IconButton>
          <IconButton $w={20} $h={28} aria-label="更多工具"><Icon n="chevrons" s={16} /></IconButton>
        </ToolGroup>
      </Toolbar>

      <Ribbon>
        <RibbonTab $w={58} $on>建模</RibbonTab>
        <RibbonTab $w={102}>自由形式</RibbonTab>
        <RibbonTab $w={74}>选择</RibbonTab>
        <RibbonTab $w={102}>对象绘制</RibbonTab>
        <RibbonTab $w={74}>填充</RibbonTab>
        <ToolGroup $gap={4} $pad={6}><Icon n="pill" s={15} /><Icon n="triDown" s={6} /></ToolGroup>
      </Ribbon>
      <SubRibbon><button>多边形建模</button></SubRibbon>

      <Main>
        <Dock>
          <Handle />
          <DockBody>
            <IconButton $w={19} $h={19} aria-label="展开"><Icon n="triRight" s={10} /></IconButton>
            <DockTile />
          </DockBody>
        </Dock>

        <Explorer>
          <ExplorerHandle />
          <ExplorerMenu>
            <ExplorerMenuItem $w={46}><ExplorerMenuButton>选择</ExplorerMenuButton></ExplorerMenuItem>
            <ExplorerMenuItem $w={44}>
              <ExplorerMenuButton $open>显示</ExplorerMenuButton>
              <Popup $w={185} role="menu">
                <PopupRow>
                  <PopupItem $hot role="menuitem"><i /><span>对象类型</span><Icon n="triRight" s={9} /></PopupItem>
                  <Popup $w={174} $sub role="menu">
                    {typeItems.map(t => (
                      <PopupItem key={t} role="menuitem"><i><Icon n="check" s={10} /></i><span>{t}</span></PopupItem>
                    ))}
                  </Popup>
                </PopupRow>
                {showItems.map((e, i) =>
                  e.t ? (
                    <PopupItem key={i} role="menuitem" disabled={e.off}>
                      <i>{e.on && <Icon n="check" s={10} />}</i><span>{e.t}</span>
                    </PopupItem>
                  ) : <PopupRule key={i} />
                )}
              </Popup>
            </ExplorerMenuItem>
            <ExplorerMenuItem $w={42}><ExplorerMenuButton>编辑</ExplorerMenuButton></ExplorerMenuItem>
            <ExplorerMenuItem $w={58}><ExplorerMenuButton>自定义</ExplorerMenuButton></ExplorerMenuItem>
          </ExplorerMenu>
          <SearchBox aria-label="查找" />
          <ExplorerBody>
            <FilterColumn>
              {filters.map(f => (
                <IconButton key={f} $w={22} $h={20} $on aria-label={f}><Icon n={f} s={17} /></IconButton>
              ))}
              <FilterRule />
              <IconButton $w={22} $h={20} aria-label="列表"><Icon n="doc" s={16} /></IconButton>
              <IconButton $w={22} $h={20} aria-label="空白"><Icon n="blank" s={16} /></IconButton>
              <IconButton $w={22} $h={20} $color="#5c5cb4" aria-label="更多过滤"><Icon n="chevrons" s={10} /></IconButton>
            </FilterColumn>
            <TreeBox><TreeHead>名称</TreeHead></TreeBox>
          </ExplorerBody>
          <ExplorerFoot>
            <LayerField aria-label="图层" defaultValue="默认" />
            <ToolGroup $gap={7} $pad={0}><Icon n="triDown" s={6} /><Rule $h={24} $light /></ToolGroup>
            <IconButton $w={18} $h={24} aria-label="图层"><Icon n="layers" s={16} /></IconButton>
            <IconButton $w={24} $h={24} $on aria-label="层次"><Icon n="tree" s={18} /></IconButton>
            <Rule $h={24} $light />
            <span>选择集:</span>
            <Spacer />
            <IconButton $w={16} $h={24} $color="#5c5cb4" aria-label="更多"><Icon n="chevrons" s={10} /></IconButton>
          </ExplorerFoot>
        </Explorer>

        <Viewport>
          <Scene />
          <ViewLabels>
            <button>[+]</button>
            <button>[透视 ]</button>
            <button>[标准 ]</button>
            <button>[默认明暗处理 ]</button>
            <IconButton $w={20} $h={16} aria-label="过滤"><Icon n="funnel" s={12} /></IconButton>
          </ViewLabels>
        </Viewport>

        <Command>
          <Handle />
          <CommandTabs>
            {["plus", "modify", "hierarchy", "motion", "display", "utility"].map((n, i) => (
              <CommandTab key={n} $on={i === 0} aria-label={n}><Icon n={n} s={18} /></CommandTab>
            ))}
          </CommandTabs>
          <Categories>
            {["sphere", "shapes", "light", "camera", "helper", "waves", "gears"].map((n, i) => (
              <IconButton key={n} $w={24} $h={24} $on={i === 0} aria-label={n}><Icon n={n} s={i ? 17 : 22} /></IconButton>
            ))}
          </Categories>
          <Combo label="类别" value="标准基本体" $h={20} />
          <RolloutArea>
            <RolloutStack>
              <Rollout>
                <RolloutHead><Icon n="triDown" s={8} /><span>对象类型</span><Icon n="grip" s={8} /></RolloutHead>
                <AutoGrid><input type="checkbox" disabled />自动栅格</AutoGrid>
                <ButtonGrid>{primitives.map(p => <FlatButton key={p}>{p}</FlatButton>)}</ButtonGrid>
              </Rollout>
              <Rollout>
                <RolloutHead><Icon n="triDown" s={8} /><span>名称和颜色</span><Icon n="grip" s={8} /></RolloutHead>
                <NameRow><input aria-label="名称" /><button aria-label="颜色" /></NameRow>
              </Rollout>
            </RolloutStack>
            <ScrollTrack />
          </RolloutArea>
        </Command>
      </Main>

      <TimeSlider>
        <IconButton $w={14} $h={17} $raised aria-label="上一帧"><Icon n="left" s={10} /></IconButton>
        <FlatButton $w={123}>0&nbsp; / &nbsp;100</FlatButton>
        <IconButton $w={14} $h={17} $raised aria-label="下一帧"><Icon n="right" s={10} /></IconButton>
      </TimeSlider>
      <Track>
        <TrackSide $w={50}><Icon n="curve" s={17} /></TrackSide>
        <Ruler />
        <TrackSide $w={49} />
      </Track>

      <Status>
        <Script><input aria-label="宏录制器" /><input aria-label="脚本侦听器" defaultValue="Array modifier" /></Script>
        <StatusMiddle>
          <StatusRow>
            <Clipped>未选</Clipped>
            <StateIcons><Icon n="isolate" s={18} /><Icon n="lock" s={16} /><Icon n="absolute" s={15} /></StateIcons>
            {coords.map(([k, v]) => <Coord key={k}><span>{k}</span><input defaultValue={v} /></Coord>)}
            <GridSize>栅格 = 10.0</GridSize>
          </StatusRow>
          <StatusRow>
            <Prompt>单击或单击并拖动以选择对象</Prompt>
            <Rule $h={16} />
            <Enable>
              <IconButton $w={20} $h={20} $raised aria-label="安全"><Icon n="shield" s={14} /></IconButton>
              <span>启用:</span>
              <Dot />
              <IconButton $w={20} $h={20} $raised aria-label="计数"><Icon n="zero" s={16} /></IconButton>
              <Rule $h={16} />
            </Enable>
            <ToolGroup $gap={10} $pad={9}><Icon n="cube" s={13} /><span>添加时间标记</span></ToolGroup>
          </StatusRow>
        </StatusMiddle>
        <Transport>
          <TransportRow>
            <Icon n="first" s={15} /><Rule />
            <Icon n="prev" s={15} /><Icon n="play" s={17} /><Icon n="next" s={15} />
            <Rule /><Icon n="last" s={15} />
          </TransportRow>
          <TransportRow>
            <Icon n="keyMode" s={13} />
            <FrameField><input aria-label="当前帧" defaultValue="0" /><Icon n="updown" s={10} /></FrameField>
            <Icon n="clock" s={15} />
          </TransportRow>
        </Transport>
        <KeyArea>
          <IconButton $w={41} $h={43} $raised aria-label="设置关键点"><Icon n="bigKey" s={30} /></IconButton>
          <FlatButton>自动关键点</FlatButton>
          <Combo label="选定对象" value="选定对象" $h={20} />
          <FlatButton $h={21}>设置关键点</FlatButton>
          <IconButton $w={22} $h={21} aria-label="切线"><Icon n="tangent" s={18} /></IconButton>
          <FlatButton $h={21}>关键点过滤器..</FlatButton>
        </KeyArea>
        <Nav>
          {["zoom", "zoomAll", "extents", "extentsAll", "fov", "pan", "orbit", "maximize"].map(n => (
            <IconButton key={n} $w={24} $h={22} aria-label={n}><Icon n={n} s={17} /></IconButton>
          ))}
        </Nav>
        <SizeCorner><Icon n="sizeGrip" s={12} /></SizeCorner>
      </Status>
      <Behind />
    </Shell>
  );
}
